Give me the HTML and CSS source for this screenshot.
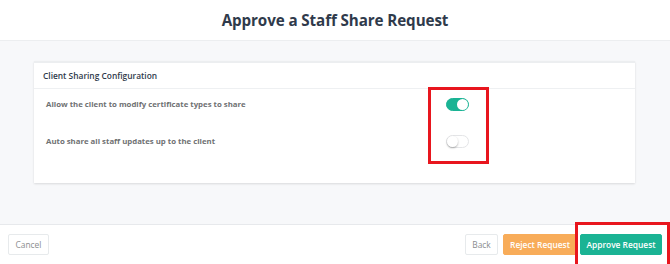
FILE: index.html
```html
<!DOCTYPE html>
<html>
<head>
<meta charset="utf-8">
<link rel="stylesheet" href="styles.css">
</head>
<body>
<div class="page">
  <header class="top">
    <h1 class="title">Approve a Staff Share Request</h1>
  </header>
  <main class="main">
    <section class="card">
      <div class="card-head">Client Sharing Configuration</div>
      <div class="card-body">
        <div class="row">
          <span class="label">Allow the client to modify certificate types to share</span>
          <span class="toggle on"><span class="knob"></span></span>
        </div>
        <div class="row">
          <span class="label">Auto share all staff updates up to the client</span>
          <span class="toggle"><span class="knob"></span></span>
        </div>
      </div>
    </section>
    <div class="mark mark-toggles"></div>
  </main>
  <footer class="foot">
    <button class="btn btn-default btn-cancel">Cancel</button>
    <div class="actions">
      <button class="btn btn-default btn-back">Back</button>
      <button class="btn btn-warning">Reject Request</button>
      <button class="btn btn-primary">Approve Request</button>
    </div>
    <div class="mark mark-approve"></div>
  </footer>
</div>
</body>
</html>
```
FILE: styles.css
```css
* { box-sizing: border-box; }
html, body { margin: 0; padding: 0; }
body {
  font-family: "Open Sans", "Liberation Sans", sans-serif;
  background: #fff;
  color: #676a6c;
  width: 670px;
  height: 264px;
  overflow: hidden;
}
.page { display: flex; flex-direction: column; height: 264px; }
.top {
  height: 41px;
  display: flex;
  align-items: center;
  justify-content: center;
  border-bottom: 1px solid #eceef0;
  background: #fff;
}
.title {
  margin: 0;
  font-size: 15.2px;
  font-weight: 700;
  color: #2f3a4b;
  letter-spacing: -0.1px;
}
.main {
  position: relative;
  background: #f7f8fa;
  height: 184px;
  padding: 20px 35px 0 34px;
  border-bottom: 1px solid #e7e9ec;
}
.card {
  background: #fff;
  border-top: 2px solid #eceef0;
  box-shadow: 0 1px 2px rgba(0,0,0,0.12);
  height: 122px;
}
.card-head {
  height: 26px;
  display: flex;
  align-items: center;
  padding-left: 9px;
  font-size: 8.4px;
  font-weight: 600;
  color: #2f3a4b;
  border-bottom: 1px solid #eef0f2;
}
.card-body {
  padding: 3px 0 0 12px;
  display: flex;
  flex-direction: column;
  gap: 13px;
}
.row {
  display: flex;
  align-items: center;
  height: 24px;
}
.label {
  width: 400px;
  font-size: 7.8px;
  font-weight: 700;
  color: #6f7173;
}
.toggle {
  width: 23px;
  height: 13px;
  border-radius: 7px;
  background: #fff;
  border: 1px solid #e4e5e7;
  position: relative;
  display: inline-block;
}
.toggle .knob {
  position: absolute;
  top: 0px;
  left: 0px;
  width: 11px;
  height: 11px;
  border-radius: 50%;
  background: #fff;
  box-shadow: 0 1px 2px rgba(0,0,0,0.3);
}
.toggle.on { background: #1ab394; border-color: #1ab394; }
.toggle.on .knob { left: 10px; box-shadow: none; }
.foot {
  position: relative;
  flex: 1;
  display: flex;
  align-items: flex-start;
  justify-content: space-between;
  padding: 9px 8px 0 8px;
  background: #fff;
}
.actions { display: flex; }
.btn {
  font-family: "Open Sans", "Liberation Sans", sans-serif;
  font-size: 8.4px;
  height: 21px;
  padding: 0;
  border-radius: 2px;
  border: 1px solid transparent;
  cursor: pointer;
  text-align: center;
}
.btn-default { background: #fff; border-color: #e7eaec; color: #8a8c8e; }
.btn-cancel { width: 41px; }
.btn-back { width: 33px; margin-right: 5px; }
.btn-warning { width: 74px; background: #f8ac59; border-color: #f8ac59; color: #fff; font-weight: 600; margin-right: 3px; }
.btn-primary { width: 82px; background: #1ab394; border-color: #1ab394; color: #fff; font-weight: 600; }
.mark {
  position: absolute;
  border: 3px solid #e8161e;
}
.mark-toggles { left: 428px; top: 46px; width: 61px; height: 77px; }
.mark-approve { left: 575px; top: -3px; width: 95px; height: 45px; }
```
